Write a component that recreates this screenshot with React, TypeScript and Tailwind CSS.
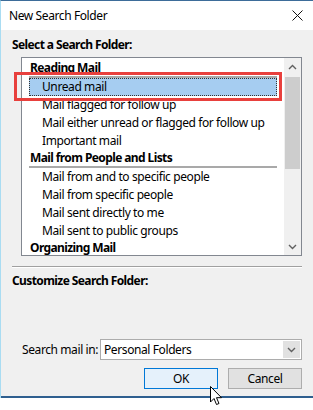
import React from 'react'

const font = { fontFamily: '"Noto Sans", "Open Sans", sans-serif' }

function Header({ label }: { label: string }) {
  return (
    <div className="flex flex-col">
      <span className="h-[16px] pl-[1px] leading-[16px] font-bold tracking-[-0.6px]">{label}</span>
      <div className="h-[2px] bg-[#a9a9a9]" />
    </div>
  )
}

function Item({ label, selected }: { label: string; selected?: boolean }) {
  return (
    <div
      className={
        selected
          ? 'h-[18px] pl-[12px] leading-[16px] bg-[#a6cdf1] border border-dotted border-[#333]'
          : 'h-[18px] pl-[13px] leading-[18px]'
      }
    >
      {label}
    </div>
  )
}

function Chevron({ up }: { up?: boolean }) {
  return (
    <svg width="9" height="6" viewBox="0 0 9 6" fill="none">
      <path
        d={up ? 'M1 5 L4.5 1.5 L8 5' : 'M1 1 L4.5 4.5 L8 1'}
        stroke="#606060"
        strokeWidth="1.4"
      />
    </svg>
  )
}

export default function App() {
  return (
    <div
      className="relative w-[313px] h-[410px] bg-white text-[12px] tracking-[-0.4px] whitespace-nowrap text-black"
      style={font}
    >
      <div className="flex flex-col border-t border-l border-t-[#3d6c99] border-l-[#a9dcf2]">
        <div className="flex items-center justify-between h-[29px] pl-[8px] pr-[10px] bg-white">
          <span className="leading-[16px]">New Search Folder</span>
          <svg width="11" height="11" viewBox="0 0 11 11" fill="none">
            <path d="M0.5 0.5 L10.5 10.5 M10.5 0.5 L0.5 10.5" stroke="#111" strokeWidth="1" />
          </svg>
        </div>

        <div className="flex flex-col h-[366px] bg-[#f0f0f0] pt-[7px] pr-[11px] pl-[11px]">
          <span className="h-[16px] leading-[16px] font-bold tracking-[-0.6px]">Select a Search Folder:</span>

          <div className="flex mt-[4px] ml-[9px] h-[199px] bg-white border border-[#828790]">
            <div className="flex-1 flex flex-col pt-[2px] px-[7px] overflow-hidden">
              <Header label="Reading Mail" />
              <Item label="Unread mail" selected />
              <Item label="Mail flagged for follow up" />
              <Item label="Mail either unread or flagged for follow up" />
              <Item label="Important mail" />
              <Header label="Mail from People and Lists" />
              <Item label="Mail from and to specific people" />
              <Item label="Mail from specific people" />
              <Item label="Mail sent directly to me" />
              <Item label="Mail sent to public groups" />
              <Header label="Organizing Mail" />
            </div>
            <div className="flex flex-col w-[17px] bg-[#f0f0f0]">
              <div className="flex items-center justify-center h-[17px]">
                <Chevron up />
              </div>
              <div className="mt-[2px] mx-[1px] h-[92px] bg-[#cdcdcd]" />
              <div className="flex-1" />
              <div className="flex items-center justify-center h-[17px]">
                <Chevron />
              </div>
            </div>
          </div>

          <div className="mt-[10px] h-[1px] bg-[#a0a0a0]" />
          <div className="h-[1px] bg-white" />

          <span className="mt-[5px] h-[16px] leading-[16px] font-bold tracking-[-0.6px]">
            Customize Search Folder:
          </span>

          <div className="flex items-center mt-[50px] pl-[10px]">
            <span className="w-[78px] leading-[16px]">Search mail in:</span>
            <div className="flex flex-1 h-[21px] bg-white border border-[#acacac]">
              <span className="flex-1 pl-[3px] leading-[19px]">Personal Folders</span>
              <div className="flex items-center justify-center w-[17px] m-[1px] bg-[#e1e1e1]">
                <Chevron />
              </div>
            </div>
          </div>

          <div className="flex justify-end gap-[10px] mt-[8px]">
            <button className="w-[74px] h-[21px] bg-[#e5f1fb] border border-[#0078d7] leading-[19px]">
              OK
            </button>
            <button className="w-[74px] h-[21px] bg-[#e1e1e1] border border-[#adadad] leading-[19px]">
              Cancel
            </button>
          </div>
        </div>
        <div className="h-[2px] bg-[#2f5f8f]" />
      </div>

      <div className="absolute left-[14px] top-[72px] w-[268px] h-[29px] border-[3px] border-[#e8403d]" />

      <svg
        className="absolute left-[210px] top-[386px]"
        width="13"
        height="20"
        viewBox="0 0 13 20"
        fill="none"
      >
        <path
          d="M0.5 0.5 L0.5 16 L4 12.5 L6.5 18.5 L9 17.5 L6.5 11.7 L11.5 11.7 Z"
          fill="#fff"
          stroke="#000"
          strokeWidth="1"
          strokeLinejoin="round"
        />
      </svg>
    </div>
  )
}
